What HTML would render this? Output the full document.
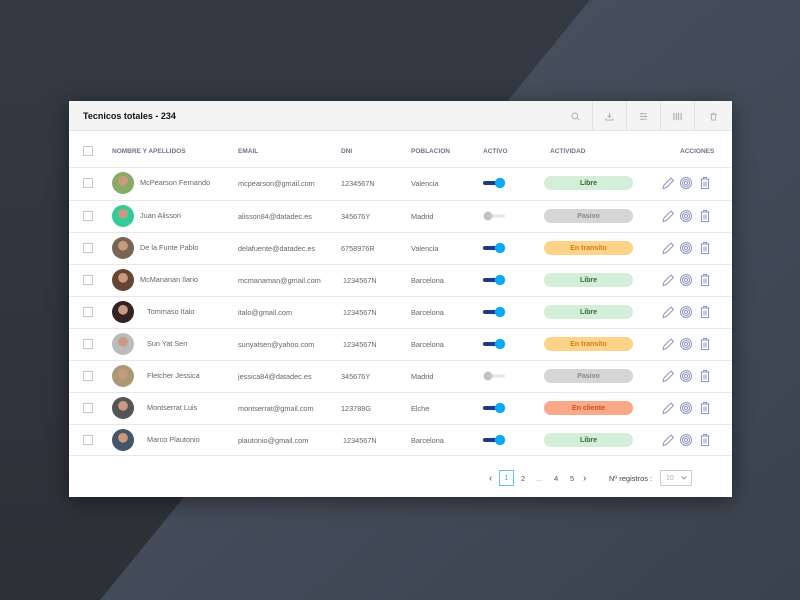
<!DOCTYPE html>
<html><head><meta charset="utf-8"><style>
*{margin:0;padding:0;box-sizing:border-box}
body{width:800px;height:600px;overflow:hidden;font-family:"Liberation Sans",sans-serif;position:relative;background:#30363e}
#bg{position:absolute;left:0;top:0}
.card{position:absolute;left:69px;top:101px;width:663px;height:396px;background:#fff;box-shadow:0 4px 20px rgba(0,0,0,.45)}
.top{height:30px;background:#f4f4f4;border-bottom:1px solid #e4e4e4;position:relative}
.top .t{position:absolute;left:14px;top:10px;font-size:9px;font-weight:bold;color:#111}
.tb{position:absolute;top:0;width:34px;height:30px;border-left:1px solid #e2e2e2;display:flex;align-items:center;justify-content:center}
.abs{position:absolute}
.hd{position:absolute;top:47px;font-size:6.5px;font-weight:bold;color:#6d7387}
.row{position:absolute;left:0;width:663px;border-top:1px solid #e8e8e8}
.cb{position:absolute;left:14px;width:10px;height:10px;border:1px solid #c5c5c5;border-radius:1px;background:#fff}
.av{position:absolute;left:43px;width:22px;height:22px;border-radius:50%}
.tx{position:absolute;font-size:7.3px;color:#666}
.pill{position:absolute;left:475px;width:89px;height:14px;border-radius:7px;font-size:7px;font-weight:bold;display:flex;align-items:center;justify-content:center}
.tg{position:absolute;left:414px;width:24px;height:12px}
.pg{position:absolute;top:369px;height:16px;font-size:7.5px;color:#555;display:flex;align-items:center}
</style></head><body>
<svg id="bg" width="800" height="600"><defs>
<linearGradient id="g1" x1="0" y1="0" x2="1" y2="1"><stop offset="0" stop-color="#4b5563"/><stop offset="1" stop-color="#3a424d"/></linearGradient>
<linearGradient id="g0" x1="0" y1="0" x2="0" y2="1"><stop offset="0" stop-color="#343a43"/><stop offset="1" stop-color="#2c3138"/></linearGradient></defs>
<rect width="800" height="600" fill="url(#g0)"/>
<polygon points="590,0 800,0 800,600 100,600" fill="url(#g1)"/>
</svg>
<div class="card">
<div class="top"><div class="t">Tecnicos totales - 234</div>
<div class="tb" style="left:489px;border-left:none"><svg width="9" height="9" viewBox="0 0 10 10" fill="none" stroke="#aab" stroke-width="1"><circle cx="4.3" cy="4.3" r="3.2"/><path d="M6.7 6.7L9 9"/></svg></div>
<div class="tb" style="left:523px"><svg width="9" height="9" viewBox="0 0 10 10" fill="none" stroke="#aab" stroke-width="1"><path d="M5 1v5M3 4l2 2 2-2M1 7v2h8V7"/></svg></div>
<div class="tb" style="left:557px"><svg width="9" height="9" viewBox="0 0 10 10" fill="none" stroke="#aab" stroke-width="1"><path d="M1 2h8M1 5h8M1 8h8M3 1v2M7 4v2M4 7v2"/></svg></div>
<div class="tb" style="left:591px"><svg width="9" height="9" viewBox="0 0 10 10" fill="none" stroke="#99a" stroke-width="1"><path d="M1 1v8M3.7 1v8M6.3 1v8M9 1v8"/></svg></div>
<div class="tb" style="left:625px;width:38px"><svg width="9" height="9" viewBox="0 0 10 10" fill="none" stroke="#aab" stroke-width="1"><path d="M1.5 2.5h7M4 1h2M2.5 2.5l.5 6.5h4l.5-6.5"/></svg></div>
</div>
<div class="cb" style="top:45px"></div>
<div class="hd" style="left:43px">NOMBRE Y APELLIDOS</div>
<div class="hd" style="left:169px">EMAIL</div>
<div class="hd" style="left:272px">DNI</div>
<div class="hd" style="left:342px">POBLACION</div>
<div class="hd" style="left:414px">ACTIVO</div>
<div class="hd" style="left:481px">ACTIVIDAD</div>
<div class="hd" style="left:611px">ACCIONES</div>
<div id="rows"></div>
<div class="row" style="top:354px"></div>
<div class="pg" style="left:420px;font-size:10px">‹</div>
<div class="pg" style="left:430px;width:15px;border:1px solid #6cc3e8;color:#4aa8d8;justify-content:center;font-size:7px">1</div>
<div class="pg" style="left:452px">2</div>
<div class="pg" style="left:467px;color:#999">...</div>
<div class="pg" style="left:485px">4</div>
<div class="pg" style="left:501px">5</div>
<div class="pg" style="left:514px;font-size:10px">›</div>
<div class="pg" style="left:540px;color:#444">Nº registros :</div>
<div class="pg" style="left:591px;width:32px;border:1px solid #ccc;color:#aaa;padding-left:5px;font-size:7px">10<svg style="position:absolute;right:4px;top:5px" width="6" height="4" viewBox="0 0 6 4" fill="none" stroke="#999" stroke-width="0.9"><path d="M.5.5L3 3 5.5.5"/></svg></div>
</div>
<script>
var d=[["McPearson Fernando","mcpearson@gmail.com","1234567N","Valencia",1,"Libre",71,"#8a6"],
["Juan Alisson","alisson84@datadec.es","345676Y","Madrid",0,"Pasivo",71,"#3c9"],
["De la Funte Pablo","delafuente@datadec.es","6758976R","Valencia",1,"En transito",71,"#765"],
["McMananan Ilario","mcmanaman@gmail.com","1234567N","Barcelona",1,"Libre",71,"#643"],
["Tommaso Italo","italo@gmail.com","1234567N","Barcelona",1,"Libre",78,"#322"],
["Sun Yat Sen","sunyatsen@yahoo.com","1234567N","Barcelona",1,"En transito",78,"#bbb"],
["Fletcher Jessica","jessica84@datadec.es","345676Y","Madrid",0,"Pasivo",78,"#a97"],
["Montserrat Luis","montserrat@gmail.com","123788G","Elche",1,"En cliente",78,"#555"],
["Marco Plautonio","plautonio@gmail.com","1234567N","Barcelona",1,"Libre",78,"#456"]];
var st={"Libre":["#d4eed9","#2c6b34"],"Pasivo":["#d6d6d6","#888"],"En transito":["#fdd38a","#c9811a"],"En cliente":["#f9a98a","#c9531a"]};
var tops=[66,99,131,163,195,227,259,291,323],h="";
d.forEach(function(r,i){var t=tops[i],c=t+16;
h+='<div class="row" style="top:'+t+'px;height:33px"></div>';
h+='<div class="cb" style="top:'+(c-5)+'px"></div>';
h+='<div class="av" style="top:'+(c-11)+'px;background:radial-gradient(circle at 50% 40%,#c99a80 0 26%,'+r[7]+' 30%)"></div>';
h+='<div class="tx" style="left:'+r[6]+'px;top:'+(c-5)+'px">'+r[0]+'</div>';
h+='<div class="tx" style="left:169px;top:'+(c-4)+'px">'+r[1]+'</div>';
h+='<div class="tx" style="left:'+(r[2]=="1234567N"&&i>2?274:272)+'px;top:'+(c-4)+'px">'+r[2]+'</div>';
h+='<div class="tx" style="left:342px;top:'+(c-4)+'px">'+r[3]+'</div>';
if(r[4])h+='<svg class="tg" style="top:'+(c-6)+'px" viewBox="0 0 24 12"><rect x="0" y="4" width="18" height="4" rx="2" fill="#1f3a8a"/><circle cx="17" cy="6" r="5.2" fill="#0aa8f5"/></svg>';
else h+='<svg class="tg" style="top:'+(c-6)+'px" viewBox="0 0 24 12"><rect x="2" y="4.5" width="20" height="3" rx="1.5" fill="#e6e6e6"/><circle cx="5" cy="6" r="4.5" fill="#c4c4c4"/></svg>';
var s=st[r[5]];
h+='<div class="pill" style="top:'+(c-7)+'px;background:'+s[0]+';color:'+s[1]+'">'+r[5]+'</div>';
h+='<svg class="abs" style="left:592px;top:'+(c-7)+'px" width="54" height="14" viewBox="0 0 54 14" fill="none" stroke="#8e95c2" stroke-width="1"><path d="M2 12.5l1-3.5 7-7 2.5 2.5-7 7z"/><circle cx="25" cy="7" r="5.5"/><circle cx="25" cy="7" r="3.5"/><circle cx="25" cy="7" r="1.6"/><path d="M39.5 3h9M42.5 3V1.5h3V3M40.5 3v9.5h7V3M43 5.5v5M45 5.5v5"/></svg>';
});
document.getElementById('rows').outerHTML=h;
</script>
</body></html>
